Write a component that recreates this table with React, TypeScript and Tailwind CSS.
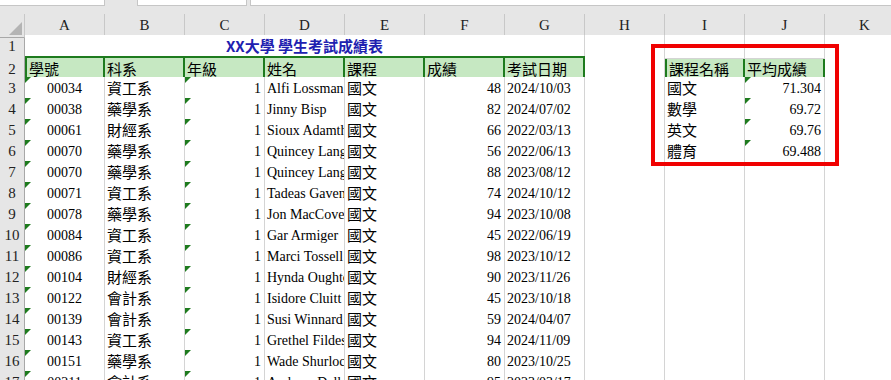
import React from 'react';

type Row = [string, string, string, string, string, string];

const rows: Row[] = [
  ['00034', '資工系', 'Alfi Lossman', '國文', '48', '2024/10/03'],
  ['00038', '藥學系', 'Jinny Bisp', '國文', '82', '2024/07/02'],
  ['00061', '財經系', 'Sioux Adamthwaite', '國文', '66', '2022/03/13'],
  ['00070', '藥學系', 'Quincey Langforth', '國文', '56', '2022/06/13'],
  ['00070', '藥學系', 'Quincey Langforth', '國文', '88', '2023/08/12'],
  ['00071', '資工系', 'Tadeas Gavens', '國文', '74', '2024/10/12'],
  ['00078', '藥學系', 'Jon MacCoveney', '國文', '94', '2023/10/08'],
  ['00084', '資工系', 'Gar Armiger', '國文', '45', '2022/06/19'],
  ['00086', '資工系', 'Marci Tossell', '國文', '98', '2023/10/12'],
  ['00104', '財經系', 'Hynda Oughton', '國文', '90', '2023/11/26'],
  ['00122', '會計系', 'Isidore Cluitt', '國文', '45', '2023/10/18'],
  ['00139', '會計系', 'Susi Winnard', '國文', '59', '2024/04/07'],
  ['00143', '資工系', 'Grethel Fildes', '國文', '94', '2024/11/09'],
  ['00151', '藥學系', 'Wade Shurlock', '國文', '80', '2023/10/25'],
  ['00211', '會計系', 'Andreas Dellow', '國文', '95', '2023/03/17'],
];

// summary table at I2:J6
const summary: [string, string][] = [
  ['國文', '71.304'],
  ['數學', '69.72'],
  ['英文', '69.76'],
  ['體育', '69.488'],
];

const cols = ['A', 'B', 'C', 'D', 'E', 'F', 'G', 'H', 'I', 'J', 'K'];
const headers = ['學號', '科系', '年級', '姓名', '課程', '成績', '考試日期'];

const serif = 'font-["Liberation_Serif","Noto_Sans_CJK_TC",serif]';
const cjk = 'font-["Noto_Sans_CJK_TC","Liberation_Sans",sans-serif]';

function Tri() {
  return (
    <span className="absolute left-0 top-0 w-0 h-0 border-t-[6px] border-r-[6px] border-t-[#1e7b1e] border-r-transparent" />
  );
}

function Cell({
  children, align = 'left', tri = false, zh = false,
}: {
  children?: React.ReactNode; align?: 'left' | 'right' | 'center'; tri?: boolean; zh?: boolean;
}) {
  const a = align === 'right' ? 'justify-end pr-[3px]' : align === 'center' ? 'justify-center' : 'justify-start pl-[2px]';
  return (
    <div className={`relative flex items-center overflow-hidden whitespace-nowrap border-r border-b border-[#d4d4d4] bg-white text-black ${a} ${zh ? `${cjk} text-[15px]` : `${serif} text-[14px]`}`}>
      {tri && <Tri />}
      {children}
    </div>
  );
}

function HeadCell({ children, first = false }: { children: React.ReactNode; first?: boolean }) {
  return (
    <div className={`flex items-center pl-[2px] border-y-2 border-r-2 border-[#1e7b1e] bg-[#c6e8c2] text-[15px] text-black whitespace-nowrap ${cjk} ${first ? 'border-l-2' : ''}`}>
      {children}
    </div>
  );
}

function RowNum({ n }: { n: number }) {
  return (
    <div className={`flex items-center justify-center border-r border-b border-r-[#a8a8a8] border-b-[#d0d0d0] bg-[#e6e6e6] text-[15px] text-[#222] ${serif}`}>
      {n}
    </div>
  );
}

export default function App() {
  return (
    <div className="relative w-[891px] h-[380px] overflow-hidden bg-[#e6e6e6]">
      {/* formula bar remnants */}
      <div className="flex h-[6px] items-stretch">
        <div className="w-[105px] bg-white border-r border-b border-[#c6c6c6]" />
        <div className="w-[32px]" />
        <div className="w-[110px] bg-white border-x border-b border-[#c6c6c6]" />
        <div className="w-[3px]" />
        <div className="flex-1 bg-white border-l border-b border-[#c6c6c6]" />
      </div>
      <div className="h-[8px]" />

      {/* column headers */}
      <div className="grid grid-cols-[25px_repeat(11,80px)] h-[21px]">
        <div className="relative border-r border-b border-r-[#c8c8c8] border-b-[#a8a8a8] bg-[#e6e6e6]">
          <span className="absolute right-[2px] bottom-[2px] w-0 h-0 border-b-[13px] border-l-[13px] border-b-[#b4b4b4] border-l-transparent" />
        </div>
        {cols.map(c => (
          <div key={c} className={`flex items-center justify-center border-r border-b border-r-[#c8c8c8] border-b-[#a8a8a8] bg-[#e6e6e6] text-[15px] text-[#222] ${serif}`}>
            {c}
          </div>
        ))}
      </div>

      {/* row 1 */}
      <div className="grid grid-cols-[25px_repeat(11,80px)] h-[21px]">
        <RowNum n={1} />
        <div className={`col-span-7 flex items-center justify-center border-r border-b border-[#d4d4d4] bg-white text-[15px] font-bold text-[#2020b0] ${cjk}`}>
          XX大學 學生考試成績表
        </div>
        <Cell /><Cell /><Cell /><Cell />
      </div>

      {/* row 2: headers */}
      <div className="grid grid-cols-[25px_repeat(11,80px)] h-[21px]">
        <RowNum n={2} />
        {headers.map((h, i) => <HeadCell key={h} first={i === 0}>{h}</HeadCell>)}
        <Cell />
        <HeadCell first>課程名稱</HeadCell>
        <HeadCell>平均成績</HeadCell>
        <Cell />
      </div>

      {rows.map((r, i) => {
        const s = summary[i];
        return (
          <div key={i} className="grid grid-cols-[25px_repeat(11,80px)] h-[21px]">
            <RowNum n={i + 3} />
            <Cell align="center" tri>{r[0]}</Cell>
            <Cell zh>{r[1]}</Cell>
            <Cell align="right" tri>1</Cell>
            <Cell>{r[2]}</Cell>
            <Cell zh>{r[3]}</Cell>
            <Cell align="right">{r[4]}</Cell>
            <Cell>{r[5]}</Cell>
            <Cell />
            <Cell zh>{s ? s[0] : ''}</Cell>
            <Cell align="right" tri={!!s}>{s ? s[1] : ''}</Cell>
            <Cell />
          </div>
        );
      })}

      {/* red highlight frame drawn over the sheet */}
      <div className="absolute left-[651px] top-[44px] w-[188px] h-[122px] border-4 border-[#f00000]" />
    </div>
  );
}
